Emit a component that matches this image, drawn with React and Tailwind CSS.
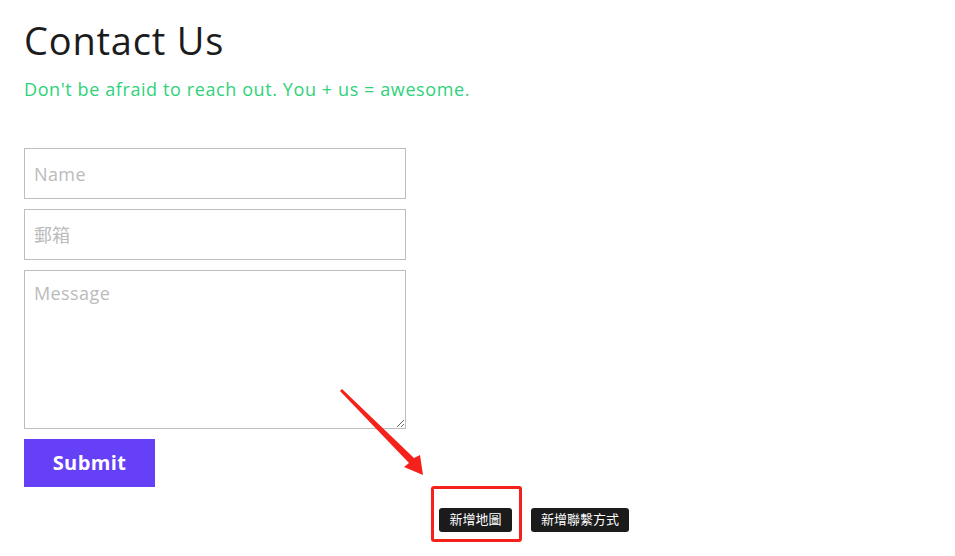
import React from "react";

const App = () => {
  return (
    <div className="relative min-h-[556px] w-[955px] bg-white font-['Open_Sans','Noto_Sans_CJK_TC',sans-serif]">
      <div className="pl-6 pt-[18px]">
        {/* Heading */}
        <h1 className="text-[38px] leading-[44px] tracking-[0.8px] text-[#1c1c1c]">Contact Us</h1>
        <p className="mt-[15px] text-[18px] leading-[24px] tracking-[0.6px] text-[#2fd27a]">
          Don't be afraid to reach out. You + us = awesome.
        </p>

        {/* Form */}
        <form className="mt-[47px] flex w-[382px] flex-col gap-[10px]">
          <input
            type="text"
            placeholder="Name"
            className="h-[51px] w-full border border-[#bdbdbd] px-[9px] text-[18px] tracking-[0.4px] outline-none placeholder:text-[#bbbbbb]"
          />
          <input
            type="text"
            placeholder="郵箱"
            className="h-[51px] w-full border border-[#bdbdbd] px-[9px] text-[18px] outline-none placeholder:text-[#bbbbbb]"
          />
          <textarea
            placeholder="Message"
            className="h-[159px] w-full resize border border-[#bdbdbd] px-[9px] py-[9px] text-[18px] tracking-[0.4px] outline-none placeholder:text-[#bbbbbb]"
          />
          <button
            type="button"
            className="h-[48px] w-[131px] bg-[#6640f7] text-[20px] font-bold tracking-[0.4px] text-white"
          >
            Submit
          </button>
        </form>
      </div>

      {/* Action buttons */}
      <div className="mt-[21px] flex gap-[19px] pl-[439px]">
        <button className="h-6 w-[73px] rounded-[3px] bg-[#1b1b1b] text-[13px] text-white">新增地圖</button>
        <button className="h-6 w-[98px] rounded-[3px] bg-[#1b1b1b] text-[13px] text-white">新增聯繫方式</button>
      </div>

      {/* Annotation overlay */}
      <div className="absolute left-[431px] top-[486px] h-[56px] w-[91px] rounded-[3px] border-[3px] border-[#f5221b]" />
      <svg className="absolute left-0 top-0" width="955" height="556" viewBox="0 0 955 556">
        <polygon
          points="340,391 342,389 414,458 420,455 423,475 404,467 409,463"
          fill="#f5221b"
        />
      </svg>
    </div>
  );
};

export default App;
